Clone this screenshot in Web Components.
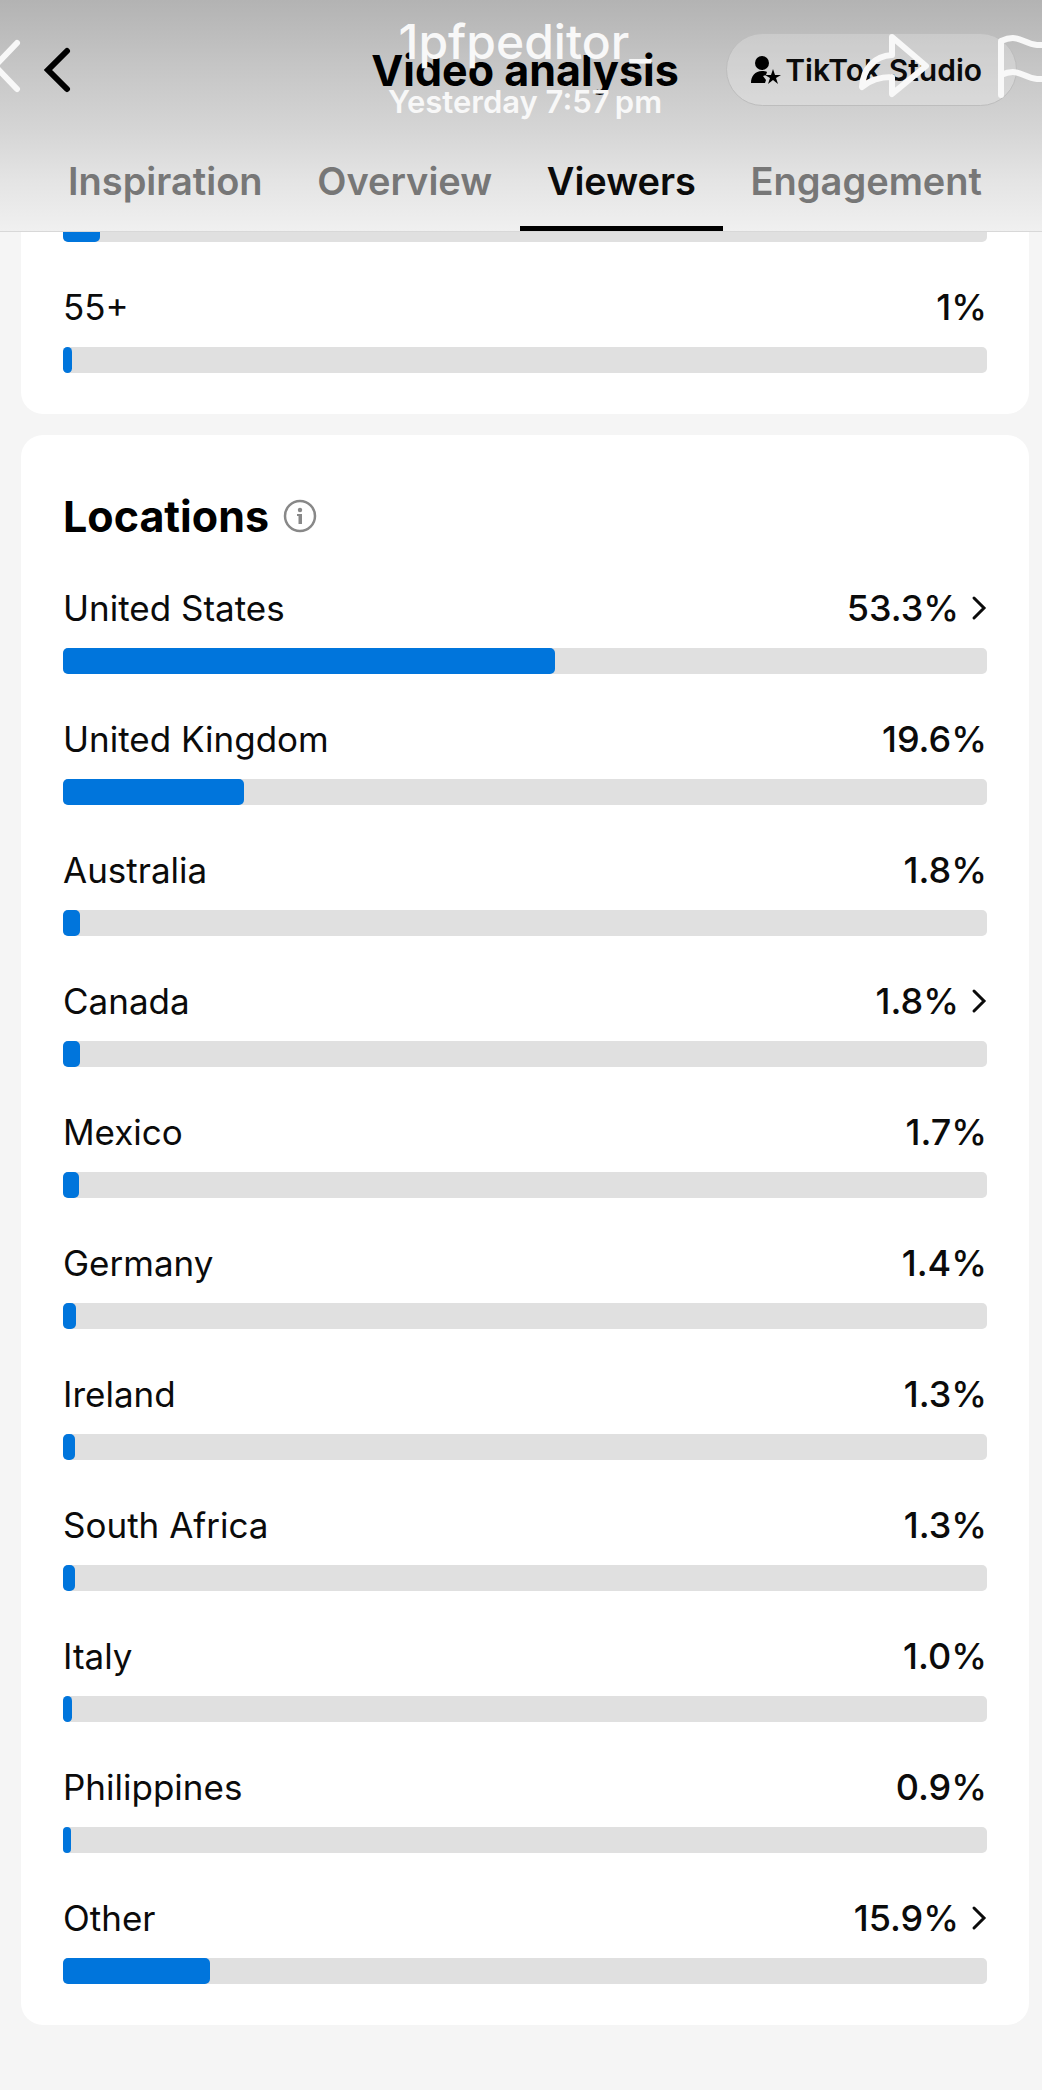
<!DOCTYPE html>
<html lang="en">
<head>
  <meta charset="UTF-8">
  <meta name="viewport" content="width=device-width, initial-scale=1">
  <title>Video analysis</title>
  <style>
    body {
      margin: 0;
      min-height: 100vh;
      background: #f5f5f5;
      color: #0b0b0b;
      font-family: Inter, "Liberation Sans", sans-serif;
      overflow-x: hidden;
    }

    main {
      display: flex;
      flex-direction: column;
      gap: 21px;
      padding: 0 13px 60px 21px;
    }

    /* the age card is scrolled up under the header */
    .scrolled {
      margin-top: -57px;
    }
  </style>
</head>
<body>
  <analysis-header>
    <span slot="title">Video analysis</span>
    <span slot="action">TikTok Studio</span>
    <post-overlay slot="overlay">
      <span slot="name">1pfpeditor_</span>
      <span slot="time">Yesterday 7:57&#8239;pm</span>
    </post-overlay>
    <tab-item slot="tabs">Inspiration</tab-item>
    <tab-item slot="tabs">Overview</tab-item>
    <tab-item slot="tabs" active>Viewers</tab-item>
    <tab-item slot="tabs">Engagement</tab-item>
  </analysis-header>

  <main>
    <stat-card class="scrolled">
      <stat-row percent="4"></stat-row>
      <stat-row label="55+" value="1%" percent="1"></stat-row>
    </stat-card>

    <stat-card heading="Locations">
      <stat-row label="United States" value="53.3%" percent="53.3" more></stat-row>
      <stat-row label="United Kingdom" value="19.6%" percent="19.6"></stat-row>
      <stat-row label="Australia" value="1.8%" percent="1.8"></stat-row>
      <stat-row label="Canada" value="1.8%" percent="1.8" more></stat-row>
      <stat-row label="Mexico" value="1.7%" percent="1.7"></stat-row>
      <stat-row label="Germany" value="1.4%" percent="1.4"></stat-row>
      <stat-row label="Ireland" value="1.3%" percent="1.3"></stat-row>
      <stat-row label="South Africa" value="1.3%" percent="1.3"></stat-row>
      <stat-row label="Italy" value="1.0%" percent="1"></stat-row>
      <stat-row label="Philippines" value="0.9%" percent="0.9"></stat-row>
      <stat-row label="Other" value="15.9%" percent="15.9" more></stat-row>
    </stat-card>
  </main>

  <script>
    class AnalysisHeader extends HTMLElement {
      connectedCallback() {
        this.attachShadow({ mode: 'open' });
        this.shadowRoot.innerHTML = `
          <style>
            :host {
              display: block;
              position: relative;
              z-index: 1;
              background: linear-gradient(#b3b3b3, #c5c5c5 28%, #d5d5d5 56%, #e4e4e4 78%, #f0f0f0);
              border-bottom: 1px solid #d8d8d8;
            }

            .bar {
              display: grid;
              grid-template-columns: 1fr auto 1fr;
              align-items: center;
              padding: 33px 25px 0 33px;
            }

            button {
              font: inherit;
              color: inherit;
              cursor: pointer;
            }

            .back {
              justify-self: start;
              display: flex;
              padding: 0 8px;
              border: 0;
              background: none;
            }

            h1 {
              margin: 0;
              font-size: 43px;
              line-height: 50px;
              font-weight: 700;
              color: #000;
            }

            .studio {
              justify-self: end;
              display: flex;
              align-items: center;
              gap: 4px;
              height: 73px;
              padding: 0 34px 0 22px;
              border: 1px solid #bdbdbd;
              border-radius: 37px;
              background: rgba(255, 255, 255, 0.22);
              font-size: 30px;
              font-weight: 600;
              white-space: nowrap;
            }

            nav {
              display: flex;
              justify-content: space-between;
              padding: 51px 33px 0 41px;
            }
          </style>

          <div class="bar">
            <button class="back" aria-label="Back">
              <svg width="30" height="46" viewBox="0 0 30 46" fill="none" stroke="#000" stroke-width="6" stroke-linecap="round">
                <path d="M26 4 7 23l19 19" />
              </svg>
            </button>
            <h1><slot name="title"></slot></h1>
            <button class="studio">
              <svg width="32" height="30" viewBox="0 0 32 30" fill="#000">
                <circle cx="13" cy="8" r="7" />
                <path d="M2 28c0-7 4-12 11-12 2 0 4 0 5 1l-1 3-3 1 3 4-1 3z" />
                <path d="m24 14 2 6h6l-5 3 2 6-5-4-5 4 2-6-5-3h6z" />
              </svg>
              <slot name="action"></slot>
            </button>
          </div>
          <nav><slot name="tabs"></slot></nav>
          <slot name="overlay"></slot>
        `;
      }
    }

    class TabItem extends HTMLElement {
      connectedCallback() {
        this.attachShadow({ mode: 'open' });
        this.shadowRoot.innerHTML = `
          <style>
            :host {
              display: block;
            }

            a {
              display: block;
              padding: 0 27px 21px;
              border-bottom: 5px solid transparent;
              color: #777;
              font-size: 38px;
              line-height: 48px;
              font-weight: 600;
              text-decoration: none;
            }

            :host([active]) a {
              color: #0b0b0b;
              border-color: #000;
            }
          </style>

          <a href="#"><slot></slot></a>
        `;
      }
    }

    // Post author and share controls floating over the header
    class PostOverlay extends HTMLElement {
      connectedCallback() {
        this.attachShadow({ mode: 'open' });
        this.shadowRoot.innerHTML = `
          <style>
            :host {
              position: absolute;
              inset: 0;
              display: grid;
              grid-template-columns: 1fr auto 1fr;
              align-items: start;
              padding-top: 14px;
              color: #f8f8f8;
              pointer-events: none;
            }

            button {
              display: flex;
              padding: 0;
              border: 0;
              background: none;
            }

            .close {
              justify-self: start;
            }

            svg {
              fill: none;
              stroke: #f8f8f8;
              stroke-width: 6px;
              stroke-linecap: round;
              stroke-linejoin: round;
            }

            .text {
              display: flex;
              flex-direction: column;
              align-items: center;
              gap: 14px;
              padding-left: 8px;
              white-space: nowrap;
            }

            .name {
              font-size: 48px;
              line-height: 56px;
              font-weight: 500;
            }

            .time {
              font-size: 31px;
              line-height: 36px;
              font-weight: 600;
            }

            .actions {
              justify-self: end;
              display: flex;
              gap: 61px;
            }

            .close,
            .actions {
              padding-top: 16px;
            }
          </style>

          <button class="close" aria-label="Close">
            <svg width="24" height="70" viewBox="0 0 24 70">
              <path d="M17 13-5 36l22 23" />
            </svg>
          </button>
          <div class="text">
            <div class="name"><slot name="name"></slot></div>
            <div class="time"><slot name="time"></slot></div>
          </div>
          <div class="actions">
            <button aria-label="Share">
              <svg width="76" height="70" viewBox="0 0 76 70">
                <path d="M37 7 71 36 37 64V47c-12 0-22 3-30 10 1-18 12-31 30-32z" />
              </svg>
            </button>
            <button aria-label="Report">
              <svg width="50" height="70" viewBox="0 0 50 70">
                <path d="M9 65V11c18-8 22 3 36 4h9M9 45c18-8 22 3 36 4h9" />
              </svg>
            </button>
          </div>
        `;
      }
    }

    class StatCard extends HTMLElement {
      connectedCallback() {
        const heading = this.getAttribute('heading');
        this.attachShadow({ mode: 'open' });
        this.shadowRoot.innerHTML = `
          <style>
            :host {
              display: block;
              padding: 41px 42px;
              border-radius: 22px;
              background: #fff;
            }

            header {
              display: flex;
              align-items: center;
              gap: 14px;
              padding: 15px 0 44px;
            }

            h2 {
              margin: 0;
              font-size: 43px;
              line-height: 50px;
              font-weight: 700;
              color: #000;
            }

            button {
              display: flex;
              padding: 0;
              border: 0;
              background: none;
            }

            .rows {
              display: flex;
              flex-direction: column;
              gap: 42px;
            }
          </style>

          ${heading ? `
            <header>
              <h2>${heading}</h2>
              <button aria-label="About ${heading}">
                <svg width="34" height="34" viewBox="0 0 34 34" fill="#888">
                  <circle cx="17" cy="17" r="15" fill="none" stroke="#888" stroke-width="2.5" />
                  <circle cx="17" cy="11" r="2.2" />
                  <path d="M14 15h5v10h-3.500v-8H14z" />
                </svg>
              </button>
            </header>
          ` : ''}
          <div class="rows"><slot></slot></div>
        `;
      }
    }

    class StatRow extends HTMLElement {
      connectedCallback() {
        const label = this.getAttribute('label');
        const value = this.getAttribute('value');
        const percent = this.getAttribute('percent');
        const chevron = `
          <svg width="16" height="26" viewBox="0 0 16 26" fill="none" stroke="#0b0b0b" stroke-width="3" stroke-linecap="round">
            <path d="m3 3 10 10L3 23" />
          </svg>
        `;

        this.attachShadow({ mode: 'open' });
        this.shadowRoot.innerHTML = `
          <style>
            :host {
              display: flex;
              flex-direction: column;
              gap: 17px;
            }

            .line {
              display: flex;
              justify-content: space-between;
              font-size: 35px;
              line-height: 46px;
            }

            .value {
              display: flex;
              align-items: center;
              gap: 12px;
              padding: 0;
              border: 0;
              background: none;
              color: inherit;
              font: inherit;
              font-size: 36px;
              font-weight: 500;
            }

            .track {
              height: 26px;
              border-radius: 5px;
              background: #e0e0e0;
            }

            .fill {
              height: 100%;
              border-radius: 5px;
              background: #0075dc;
            }
          </style>

          ${label ? `
            <div class="line">
              <span>${label}</span>
              ${this.hasAttribute('more')
                ? `<button class="value">${value}${chevron}</button>`
                : `<span class="value">${value}</span>`}
            </div>
          ` : ''}
          <div class="track"><div class="fill" style="width: ${percent}%"></div></div>
        `;
      }
    }

    customElements.define('analysis-header', AnalysisHeader);
    customElements.define('tab-item', TabItem);
    customElements.define('post-overlay', PostOverlay);
    customElements.define('stat-card', StatCard);
    customElements.define('stat-row', StatRow);
  </script>
</body>
</html>
